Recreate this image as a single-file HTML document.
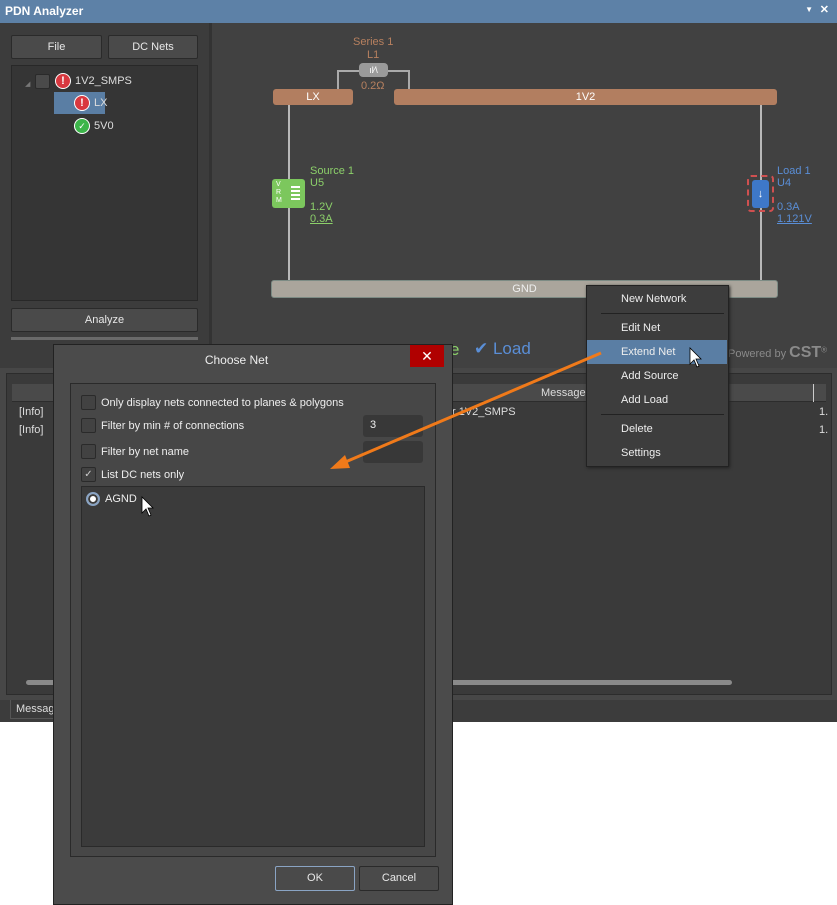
<!DOCTYPE html>
<html><head><style>
*{margin:0;padding:0;box-sizing:border-box}
body{width:837px;height:905px;background:#fff;position:relative;overflow:hidden;font-family:"Liberation Sans",sans-serif;font-size:11px;color:#ddd}
.a{position:absolute}
.btn{position:absolute;background:#4a4a4a;border:1px solid #2a2a2a;border-radius:2px;color:#e8e8e8;text-align:center;font-size:11px}
</style></head><body>
<div class="a" style="left:0;top:0;width:837px;height:722px;background:#3c3c3c"></div>
<div class="a" style="left:0;top:0;width:837px;height:23px;background:#5d81a7;color:#fff;font-weight:bold;font-size:12px;padding:4px 0 0 5px">PDN Analyzer<span style="position:absolute;right:24px;top:5px;font-size:8px">▼</span><span style="position:absolute;right:8px;top:3px;font-size:11px">✕</span></div>
<!-- left panel -->
<div class="btn" style="left:11px;top:35px;width:91px;height:24px;line-height:22px">File</div>
<div class="btn" style="left:108px;top:35px;width:90px;height:24px;line-height:22px">DC Nets</div>
<div class="a" style="left:11px;top:65px;width:187px;height:236px;background:#353535;border:1px solid #282828"></div>
<div class="a" style="left:25px;top:80px;color:#777;font-size:7px">◢</div>
<div class="a" style="left:35px;top:74px;width:15px;height:15px;background:#4a4a4a;border:1px solid #2a2a2a;border-radius:2px"></div>
<div class="a" style="left:55px;top:73px;width:16px;height:16px;border-radius:50%;background:#d9383f;border:1px solid #fff;color:#fff;font-weight:bold;text-align:center;line-height:14px;font-size:11px">!</div>
<div class="a" style="left:75px;top:75px;font-size:11px">1V2_SMPS</div>
<div class="a" style="left:54px;top:92px;width:51px;height:22px;background:#5a7ea4"></div>
<div class="a" style="left:74px;top:95px;width:16px;height:16px;border-radius:50%;background:#d9383f;border:1px solid #fff;color:#fff;font-weight:bold;text-align:center;line-height:14px">!</div>
<div class="a" style="left:94px;top:97px">LX</div>
<div class="a" style="left:74px;top:118px;width:16px;height:16px;border-radius:50%;background:#3cb54a;border:1px solid #fff;color:#fff;text-align:center;line-height:14px;font-size:9px">✓</div>
<div class="a" style="left:94px;top:120px">5V0</div>
<div class="btn" style="left:11px;top:308px;width:187px;height:24px;line-height:22px">Analyze</div>
<div class="a" style="left:11px;top:337px;width:187px;height:3px;background:#6a6a6a"></div>
<div class="a" style="left:209px;top:23px;width:3px;height:345px;background:#333"></div>
<!-- canvas -->
<div class="a" style="left:212px;top:23px;width:625px;height:345px;background:#414141"></div>
<div class="a" style="left:353px;top:36px;color:#b7805f;font-size:11px">Series 1</div>
<div class="a" style="left:367px;top:49px;color:#b7805f">L1</div>
<div class="a" style="left:337px;top:70px;width:73px;height:20px;border:2px solid #aaa;border-bottom:none"></div>
<div class="a" style="left:359px;top:63px;width:29px;height:14px;background:#9a9a9a;border-radius:4px;color:#fff;font-size:9px;text-align:center;line-height:14px">ıl⁄\</div>
<div class="a" style="left:361px;top:80px;color:#b7805f">0.2Ω</div>
<div class="a" style="left:273px;top:89px;width:80px;height:16px;background:#b27e60;border-radius:3px;color:#fff;text-align:center;line-height:16px">LX</div>
<div class="a" style="left:394px;top:89px;width:383px;height:16px;background:#b27e60;border-radius:3px;color:#fff;text-align:center;line-height:16px">1V2</div>
<div class="a" style="left:288px;top:105px;width:2px;height:176px;background:#b8b8b8"></div>
<div class="a" style="left:760px;top:105px;width:2px;height:176px;background:#b8b8b8"></div>
<div class="a" style="left:272px;top:179px;width:33px;height:29px;background:#7cc75d;border-radius:3px;color:#fff;font-size:7px;line-height:8px;padding:2px 0 0 4px">V<br>R<br>M</div>
<div class="a" style="left:291px;top:186px;width:9px;height:2px;background:#fff;box-shadow:0 4px 0 #fff,0 8px 0 #fff,0 12px 0 #fff"></div>
<div class="a" style="left:310px;top:165px;color:#8cd06a;line-height:12px">Source 1<br>U5<br><br style="line-height:6px">1.2V<br><u>0.3A</u></div>
<div class="a" style="left:747px;top:175px;width:27px;height:37px;border:2px dashed #d05050;border-radius:4px"></div>
<div class="a" style="left:752px;top:180px;width:17px;height:28px;background:#3e78c8;border-radius:3px;color:#fff;text-align:center;line-height:28px;font-weight:bold">↓</div>
<div class="a" style="left:777px;top:165px;color:#5a8ed6;line-height:12px">Load 1<br>U4<br><br style="line-height:6px">0.3A<br><u>1.121V</u></div>
<div class="a" style="left:271px;top:280px;width:507px;height:18px;background:#aaa59c;border:1px solid #7c8b84;border-radius:3px;color:#eee;text-align:center;line-height:16px">GND</div>
<div class="a" style="left:450px;top:340px;color:#8cd06a;font-size:17px">e</div>
<div class="a" style="left:474px;top:339px;color:#5a8ed6;font-size:17px">✔ Load</div>
<div class="a" style="left:728px;top:344px;color:#8a8a8a;font-size:11px">Powered by <b style="font-size:16px">CST</b><sup style="font-size:8px">®</sup></div>
<!-- messages -->
<div class="a" style="left:0;top:368px;width:837px;height:332px;background:#474747"></div>
<div class="a" style="left:6px;top:373px;width:826px;height:322px;background:#3a3a3a;border:1px solid #2c2c2c"></div>
<div class="a" style="left:12px;top:384px;width:814px;height:18px;background:#4a4a4a;border-bottom:1px solid #2c2c2c"></div>
<div class="a" style="left:541px;top:387px;color:#ddd">Message</div>
<div class="a" style="left:813px;top:384px;width:1px;height:18px;background:#ccc"></div>
<div class="a" style="left:19px;top:406px">[Info]</div>
<div class="a" style="left:19px;top:424px">[Info]</div>
<div class="a" style="left:452px;top:406px">r 1V2_SMPS</div>
<div class="a" style="left:819px;top:406px">1.</div>
<div class="a" style="left:819px;top:424px">1.</div>
<div class="a" style="left:26px;top:680px;width:706px;height:5px;background:#8a8a8a;border-radius:3px"></div>
<div class="a" style="left:10px;top:700px;width:50px;height:19px;background:#3a3a3a;border:1px solid #555;border-top:none;padding:3px 0 0 5px">Messag</div>
<!-- context menu -->
<div class="a" style="left:586px;top:285px;width:143px;height:182px;background:#3d3d3d;border:1px solid #222;box-shadow:1px 1px 3px #222"></div>
<div class="a" style="left:587px;top:340px;width:140px;height:24px;background:#5a7ea4"></div>
<div class="a" style="left:601px;top:313px;width:123px;height:1px;background:#222"></div>
<div class="a" style="left:601px;top:414px;width:123px;height:1px;background:#222"></div>
<div class="a" style="left:621px;top:293px;color:#eee">New Network</div>
<div class="a" style="left:621px;top:322px;color:#eee">Edit Net</div>
<div class="a" style="left:621px;top:346px;color:#eee">Extend Net</div>
<div class="a" style="left:621px;top:370px;color:#eee">Add Source</div>
<div class="a" style="left:621px;top:394px;color:#eee">Add Load</div>
<div class="a" style="left:621px;top:423px;color:#eee">Delete</div>
<div class="a" style="left:621px;top:447px;color:#eee">Settings</div>
<!-- dialog -->
<div class="a" style="left:53px;top:344px;width:400px;height:561px;background:#4b4b4b;border:1px solid #222"></div>
<div class="a" style="left:53px;top:353px;width:367px;text-align:center;color:#eee;font-size:12px">Choose Net</div>
<div class="a" style="left:410px;top:345px;width:34px;height:22px;background:#b00000;color:#fff;text-align:center;line-height:22px;font-size:14px">✕</div>
<div class="a" style="left:70px;top:383px;width:366px;height:474px;border:1px solid #2a2a2a;background:#474747"></div>
<div class="a" style="left:81px;top:395px;width:15px;height:15px;border:1px solid #2a2a2a;background:#424242;border-radius:2px"></div>
<div class="a" style="left:101px;top:397px;color:#eee">Only display nets connected to planes &amp; polygons</div>
<div class="a" style="left:81px;top:418px;width:15px;height:15px;border:1px solid #2a2a2a;background:#424242;border-radius:2px"></div>
<div class="a" style="left:101px;top:420px;color:#eee">Filter by min # of connections</div>
<div class="a" style="left:363px;top:415px;width:60px;height:22px;background:#383838;border-radius:3px;color:#eee;padding:4px 0 0 7px">3</div>
<div class="a" style="left:81px;top:444px;width:15px;height:15px;border:1px solid #2a2a2a;background:#424242;border-radius:2px"></div>
<div class="a" style="left:101px;top:446px;color:#eee">Filter by net name</div>
<div class="a" style="left:363px;top:441px;width:60px;height:22px;background:#383838;border-radius:3px"></div>
<div class="a" style="left:81px;top:467px;width:15px;height:15px;border:1px solid #2a2a2a;background:#424242;border-radius:2px;color:#ccc;font-size:10px;text-align:center;line-height:13px">✓</div>
<div class="a" style="left:101px;top:469px;color:#eee">List DC nets only</div>
<div class="a" style="left:81px;top:486px;width:344px;height:361px;background:#3b3b3b;border:1px solid #2a2a2a"></div>
<div class="a" style="left:86px;top:492px;width:14px;height:14px;border-radius:50%;border:2px solid #8aa4c4;background:#fff;box-shadow:inset 0 0 0 2px #3b3b3b"></div>
<div class="a" style="left:105px;top:493px;color:#eee">AGND</div>
<div class="btn" style="left:275px;top:866px;width:80px;height:25px;line-height:23px;border-color:#8aa4c4">OK</div>
<div class="btn" style="left:359px;top:866px;width:80px;height:25px;line-height:23px">Cancel</div>
<!-- arrow -->
<svg class="a" style="left:0;top:0" width="837" height="905">
<line x1="601" y1="353" x2="343" y2="463" stroke="#f07a1a" stroke-width="3"/>
<polygon points="330,469 345,455 350,468" fill="#f07a1a"/>
<path d="M690 348 L690 364 L694 360 L697 367 L699 366 L696 359 L701 359 Z" fill="#fff" stroke="#000" stroke-width="0.8"/>
<path d="M142 497 L142 513 L146 509 L149 516 L151 515 L148 508 L153 508 Z" fill="#fff" stroke="#000" stroke-width="0.8"/>
</svg>
</body></html>
